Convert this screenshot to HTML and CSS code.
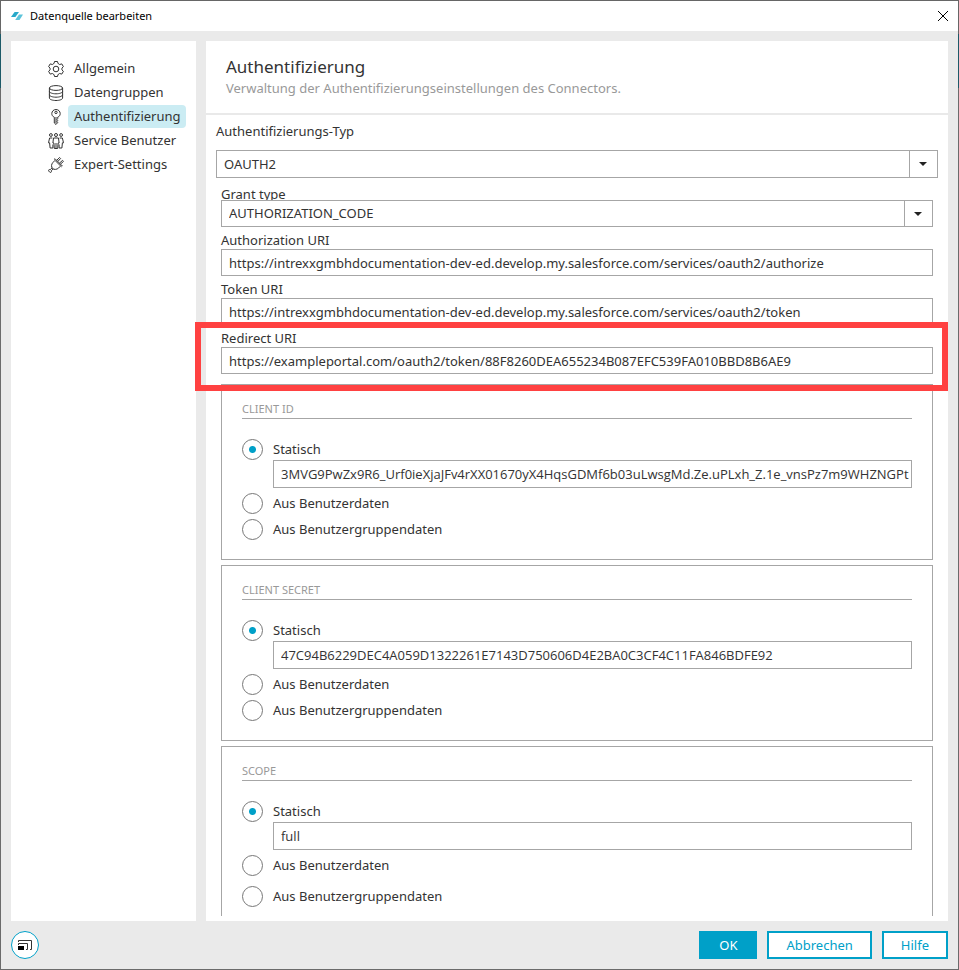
FILE: index.html
```html
<!DOCTYPE html>
<html lang="de">
<head>
  <meta charset="UTF-8" />
  <meta name="viewport" content="width=device-width, initial-scale=1.0"/>
  <title>Datenquelle bearbeiten</title>
  <link rel="stylesheet" href="styles.css">
</head>
<body>
  <div class="window">
    <header class="titlebar">
      <svg class="logo" viewBox="0 0 12 10">
        <path d="M3.6 1H8L4.4 6H0Z" fill="#27a9c9"/>
        <path d="M8 3.5H12L8.5 9H4.2Z" fill="#5cc3da"/>
      </svg>
      <h1>Datenquelle bearbeiten</h1>
      <button type="button" class="close" aria-label="Schließen">
        <svg viewBox="0 0 12 12"><path d="M1 1L11 11M11 1L1 11"/></svg>
      </button>
    </header>

    <div class="columns">
      <!-- Navigation -->
      <nav class="sidebar">
        <a href="#">
          <svg viewBox="0 0 16 16"><path d="M6.5 .5H9.5L10 2.5Q10.9 2.8 11.6 3.5L13.8 2.9L15.4 5.7L13.9 7.1Q14.1 8 13.9 8.9L15.4 10.3L13.8 13.1L11.6 12.5Q10.9 13.2 10 13.5L9.5 15.5H6.5L6 13.5Q5.1 13.2 4.4 12.5L2.2 13.1L.6 10.3L2.1 8.9Q1.9 8 2.1 7.1L.6 5.7L2.2 2.9L4.4 3.5Q5.1 2.8 6 2.5Z"/><circle cx="8" cy="8" r="2.8"/></svg>
          <span>Allgemein</span>
        </a>
        <a href="#">
          <svg viewBox="0 0 16 16"><ellipse cx="8" cy="3" rx="6.6" ry="2.4"/><path d="M1.4 3V13C1.4 14.4 4.3 15.5 8 15.5S14.6 14.4 14.6 13V3M1.4 6.3C1.4 7.7 4.3 8.8 8 8.8S14.6 7.7 14.6 6.3M1.4 9.7C1.4 11.1 4.3 12.2 8 12.2S14.6 11.1 14.6 9.7"/></svg>
          <span>Datengruppen</span>
        </a>
        <a href="#" class="active">
          <svg viewBox="0 0 16 16"><path d="M6.3 8.2C4.7 7.6 3.8 6.2 3.8 4.6C3.8 2.3 5.6 .5 8 .5S12.2 2.3 12.2 4.6C12.2 6.2 11.3 7.6 9.7 8.2V9.7L9 10.5L9.7 11.5L9 12.5L9.7 13.5L8 15.5L6.3 14V8.2Z"/><path d="M8 8V14"/><circle cx="8" cy="3.4" r="1.2"/></svg>
          <span>Authentifizierung</span>
        </a>
        <a href="#">
          <svg viewBox="0 0 16 16"><circle cx="2.9" cy="2" r="1.4"/><circle cx="8" cy="2" r="1.5"/><circle cx="13.1" cy="2" r="1.4"/><path d="M5.5 5H10.5L11.1 10H10.1L9.7 15.5H6.3L5.9 10H4.9ZM8 10V15M4.3 5H1.6L.5 9.8H1.6L2.1 15H4.9V11.5M11.7 5H14.4L15.5 9.8H14.4L13.9 15H11.1V11.5"/></svg>
          <span>Service Benutzer</span>
        </a>
        <a href="#">
          <svg viewBox="0 0 16 16"><path d="M7 3.4L12.6 9L10.6 11C8.8 12.6 6.3 12.9 4.5 11.5C3.1 9.7 3.2 7.2 5 5.4ZM6.1 2.5L7 1.7L14.3 9L13.4 9.9M8.6 3.4L11.6 .5L12.6 1.5L9.8 4.5M11.4 6.2L14.5 3.4L15.5 4.4L12.4 7.2M4.1 10.8L2.2 12.7C1 12.2 .3 13 .7 14L1.9 15.3C3 15.7 3.8 15 3.3 13.8L5.2 11.9"/></svg>
          <span>Expert-Settings</span>
        </a>
      </nav>

      <!-- Authentication settings -->
      <main class="content">
        <div class="heading">
          <h2>Authentifizierung</h2>
          <p>Verwaltung der Authentifizierungseinstellungen des Connectors.</p>
        </div>

        <form class="settings" id="settings">
          <div class="auth-type">
            <label for="authType">Authentifizierungs-Typ</label>
            <div class="dropdown">
              <select id="authType"><option>OAUTH2</option></select>
            </div>
          </div>

          <div class="fields">
            <div class="field">
              <label for="grantType">Grant type</label>
              <div class="dropdown">
                <select id="grantType"><option>AUTHORIZATION_CODE</option></select>
              </div>
            </div>
            <div class="field">
              <label for="authUri">Authorization URI</label>
              <input type="text" id="authUri" value="https://intrexxgmbhdocumentation-dev-ed.develop.my.salesforce.com/services/oauth2/authorize" />
            </div>
            <div class="field">
              <label for="tokenUri">Token URI</label>
              <input type="text" id="tokenUri" value="https://intrexxgmbhdocumentation-dev-ed.develop.my.salesforce.com/services/oauth2/token" />
            </div>
            <div class="field marked">
              <label for="redirectUri">Redirect URI</label>
              <input type="text" id="redirectUri" value="https://exampleportal.com/oauth2/token/88F8260DEA655234B087EFC539FA010BBD8B6AE9" />
            </div>

            <section class="group">
              <h3>CLIENT ID</h3>
              <label class="option"><input type="radio" name="clientId" checked /> Statisch</label>
              <input type="text" aria-label="Client ID" value="3MVG9PwZx9R6_Urf0ieXjaJFv4rXX01670yX4HqsGDMf6b03uLwsgMd.Ze.uPLxh_Z.1e_vnsPz7m9WHZNGPt" />
              <label class="option"><input type="radio" name="clientId" /> Aus Benutzerdaten</label>
              <label class="option"><input type="radio" name="clientId" /> Aus Benutzergruppendaten</label>
            </section>

            <section class="group">
              <h3>CLIENT SECRET</h3>
              <label class="option"><input type="radio" name="clientSecret" checked /> Statisch</label>
              <input type="text" aria-label="Client Secret" value="47C94B6229DEC4A059D1322261E7143D750606D4E2BA0C3CF4C11FA846BDFE92" />
              <label class="option"><input type="radio" name="clientSecret" /> Aus Benutzerdaten</label>
              <label class="option"><input type="radio" name="clientSecret" /> Aus Benutzergruppendaten</label>
            </section>

            <section class="group group-last">
              <h3>SCOPE</h3>
              <label class="option"><input type="radio" name="scope" checked /> Statisch</label>
              <input type="text" aria-label="Scope" value="full" />
              <label class="option"><input type="radio" name="scope" /> Aus Benutzerdaten</label>
              <label class="option"><input type="radio" name="scope" /> Aus Benutzergruppendaten</label>
            </section>
          </div>
        </form>
      </main>
    </div>

    <footer class="actions">
      <button type="button" class="resize" aria-label="Fenstergröße">
        <svg viewBox="0 0 14 10"><path d="M.5 2V.5H13.5V9.5H12M.5 5V3.5H9.5V9.5H8"/><path class="solid" d="M0 6H6V10H0Z"/></svg>
      </button>
      <button type="submit" form="settings" class="btn primary">OK</button>
      <button type="button" class="btn">Abbrechen</button>
      <button type="button" class="btn">Hilfe</button>
    </footer>
  </div>
</body>
</html>
```
FILE: styles.css
```css
* {
  box-sizing: border-box;
}

body {
  margin: 0;
  font-family: "Noto Sans", sans-serif;
  font-size: 13px;
  line-height: 18px;
  color: #333;
}

h1, h2, h3, p {
  margin: 0;
  font-weight: normal;
}

button, input, select {
  font: inherit;
  color: inherit;
}

svg {
  display: block;
  flex: none;
  fill: none;
  stroke: #333;
  stroke-linejoin: round;
}

.window {
  display: flex;
  flex-direction: column;
  height: 100vh;
  padding: 1px;
  background: linear-gradient(#666 34px, #1d5a68 34px, #1d5a68 88px, #6b6b6b 88px);
}

/* Title bar */
.titlebar {
  display: flex;
  align-items: center;
  height: 30px;
  padding: 0 9px 0 10px;
  background: white;
}

.titlebar h1 {
  flex: 1;
  margin-left: 7px;
  font-size: 11px;
  color: black;
}

.logo {
  width: 12px;
  height: 10px;
  stroke: none;
}

.close {
  padding: 0;
  border: none;
  background: none;
}

.close svg {
  width: 12px;
  height: 12px;
  stroke: black;
}

.columns {
  display: flex;
  flex: 1;
  gap: 10px;
  min-height: 0;
  padding: 10px 10px 0;
  background: #eaeaea;
}

/* Sidebar */
.sidebar {
  display: flex;
  flex-direction: column;
  gap: 1px;
  width: 185px;
  padding: 16px 10px 0 37px;
  background: white;
}

.sidebar a {
  display: flex;
  align-items: center;
  gap: 4px;
  color: inherit;
  text-decoration: none;
}

.sidebar svg {
  width: 16px;
  height: 16px;
}

.sidebar span {
  flex: 1;
  padding-left: 6px;
  border-radius: 4px;
  line-height: 23px;
}

.sidebar .active span {
  background: #cbecf3;
}

/* Content */
.content {
  display: flex;
  flex: 1;
  flex-direction: column;
  min-width: 0;
  padding-bottom: 5px;
  background: white;
}

.heading {
  padding: 14px 20px 16px;
  border-bottom: 2px solid #e9e9e9;
}

.heading h2 {
  font-size: 17px;
  line-height: 24px;
}

.heading p {
  color: #999;
}

.settings {
  flex: 1;
  min-height: 0;
  padding: 7px 10px 0;
  overflow-x: visible;
  overflow-y: clip;
}

.auth-type label {
  display: block;
  margin-bottom: 10px;
}

input[type="text"], select {
  display: block;
  width: 100%;
  height: 27px;
  padding: 0 7px;
  border: 1px solid #a6a6a6;
  border-radius: 0;
  background: white;
}

.dropdown {
  position: relative;
}

.dropdown select {
  appearance: none;
}

.auth-type select {
  height: 28px;
}

.field select {
  padding-bottom: 1px;
}

.dropdown::before {
  content: "";
  position: absolute;
  top: 0;
  bottom: 0;
  right: 28px;
  border-left: 1px solid #a6a6a6;
}

.dropdown::after {
  content: "";
  position: absolute;
  top: 12px;
  right: 11px;
  border: 4px solid transparent;
  border-top-color: #222;
  border-bottom: none;
}

.fields {
  padding: 0 5px;
}

.field label {
  display: block;
  height: 22px;
  padding-top: 4px;
}

.field:first-child label {
  padding-top: 7px;
}

/* Frame round the highlighted field */
.marked {
  position: relative;
}

.marked::after {
  content: "";
  position: absolute;
  inset: -3px -15px -17px -26px;
  border: 6px solid #ff4141;
  pointer-events: none;
}

/* Option groups */
.group {
  margin-top: 5px;
  padding: 15px 20px 19px;
  border: 1px solid #a6a6a6;
}

.marked + .group {
  margin-top: 10px;
}

.group h3 {
  margin-bottom: 19px;
  padding-bottom: 1px;
  border-bottom: 1px solid #a6a6a6;
  font-size: 11px;
  line-height: 17px;
  color: #999;
}

.option {
  display: flex;
  align-items: center;
  gap: 10px;
  height: 22px;
}

/* long keys need the narrower face and the full box */
.group input[type="text"] {
  width: calc(100% - 31px);
  height: 28px;
  margin-left: 31px;
  padding-right: 0;
  font-family: "Open Sans", "Noto Sans", sans-serif;
}

.group input[type="text"] + .option,
.option + .option {
  margin-top: 4px;
}

.group-last {
  padding-bottom: 40px;
}

.group-last .option + .option {
  margin-top: 9px;
}

input[type="radio"] {
  appearance: none;
  width: 21px;
  height: 21px;
  margin: 0;
  border: 1px solid #777;
  border-radius: 50%;
  background: white;
}

input[type="radio"]:checked {
  background: radial-gradient(circle, #00a0c8 3px, white 4px);
}

/* Footer */
.actions {
  display: flex;
  gap: 10px;
  padding: 10px;
  background: #eaeaea;
}

.btn {
  min-width: 58px;
  height: 28px;
  padding: 0 17px;
  border: 2px solid #00a0c8;
  background: white;
  color: #00a0c8;
}

.primary {
  background: #00a0c8;
  color: white;
}

.resize {
  width: 28px;
  height: 28px;
  margin-right: auto;
  padding: 0 6px;
  border: 1px solid #00a0c8;
  border-radius: 50%;
  background: white;
}

.resize svg {
  width: 14px;
  height: 10px;
}

.resize .solid {
  fill: black;
  stroke: none;
}
```
